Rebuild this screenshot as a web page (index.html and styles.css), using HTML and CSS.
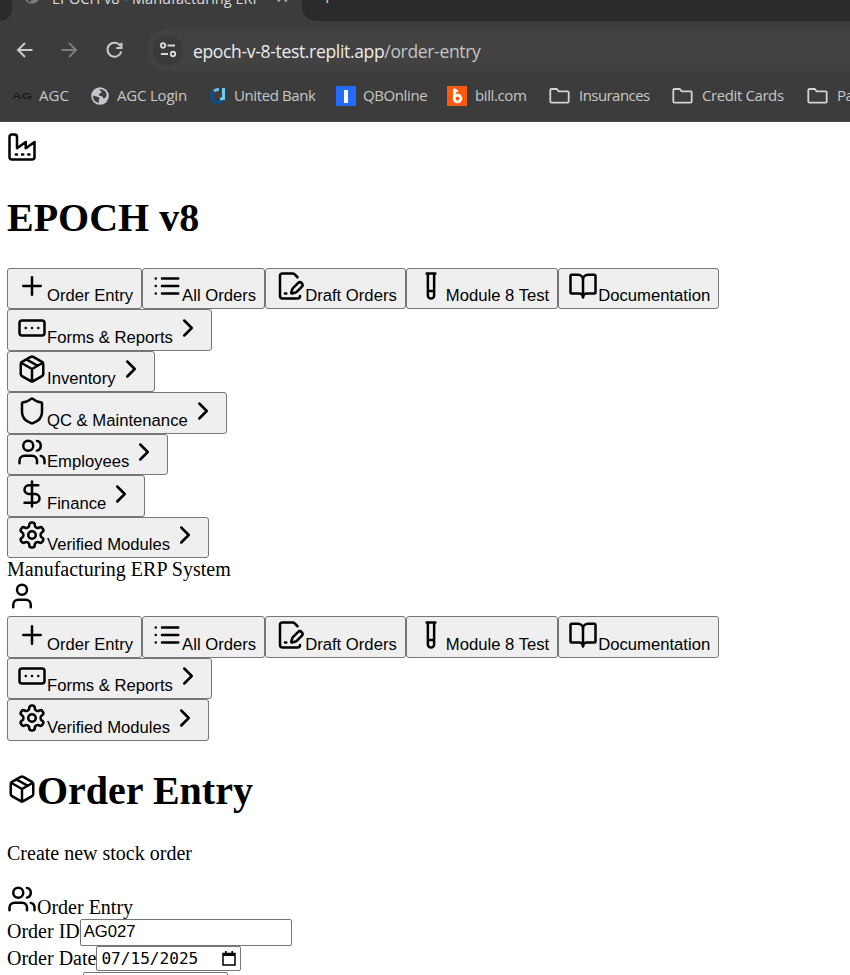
FILE: index.html
```html
<!DOCTYPE html>
<html lang="en">
<head>
<meta charset="utf-8">
<title>EPOCH v8 - Manufacturing ERP</title>
<link rel="stylesheet" href="styles.css">
</head>
<body>
<svg class="sprite" aria-hidden="true">
  <symbol id="factory" viewBox="0 0 24 24"><path d="M2 20a2 2 0 0 0 2 2h16a2 2 0 0 0 2-2V8l-7 5V8l-7 5V4a2 2 0 0 0-2-2H4a2 2 0 0 0-2 2ZM17 18h1M12 18h1M7 18h1"/></symbol>
  <symbol id="plus" viewBox="0 0 24 24"><path d="M5 12h14M12 5v14"/></symbol>
  <symbol id="list" viewBox="0 0 24 24"><path d="M8 6h13M8 12h13M8 18h13M3 6h.01M3 12h.01M3 18h.01"/></symbol>
  <symbol id="draft" viewBox="0 0 24 24"><path d="m18 5-2.414-2.414A2 2 0 0 0 14.172 2H6a2 2 0 0 0-2 2v16a2 2 0 0 0 2 2h12a2 2 0 0 0 2-2"/><path d="M21.378 12.626a1 1 0 0 0-3.004-3.004l-4.01 4.012a2 2 0 0 0-.506.854l-.837 2.87a.5.5 0 0 0 .62.62l2.87-.837a2 2 0 0 0 .854-.506z"/><path d="M8 18h1"/></symbol>
  <symbol id="tube" viewBox="0 0 24 24"><path d="M14.5 2v17.5c0 1.4-1.1 2.5-2.5 2.5s-2.5-1.1-2.5-2.5V2M8.5 2h7M14.5 16h-5"/></symbol>
  <symbol id="book" viewBox="0 0 24 24"><path d="M12 7v14"/><path d="M3 18a1 1 0 0 1-1-1V4a1 1 0 0 1 1-1h5a4 4 0 0 1 4 4 4 4 0 0 1 4-4h5a1 1 0 0 1 1 1v13a1 1 0 0 1-1 1h-6a3 3 0 0 0-3 3 3 3 0 0 0-3-3z"/></symbol>
  <symbol id="form" viewBox="0 0 24 24"><rect x="2" y="6" width="20" height="12" rx="2"/><path d="M12 12h.01M17 12h.01M7 12h.01"/></symbol>
  <symbol id="package" viewBox="0 0 24 24"><path d="M11 21.73a2 2 0 0 0 2 0l7-4A2 2 0 0 0 21 16V8a2 2 0 0 0-1-1.73l-7-4a2 2 0 0 0-2 0l-7 4A2 2 0 0 0 3 8v8a2 2 0 0 0 1 1.73zM12 22V12M3.29 7 12 12l8.71-5M7.5 4.27l9 5.15"/></symbol>
  <symbol id="shield" viewBox="0 0 24 24"><path d="M20 13c0 5-3.5 7.5-7.66 8.95a1 1 0 0 1-.67-.01C7.5 20.5 4 18 4 13V6a1 1 0 0 1 1-1c2 0 4.5-1.2 6.24-2.72a1.17 1.17 0 0 1 1.52 0C14.51 3.81 17 5 19 5a1 1 0 0 1 1 1z"/></symbol>
  <symbol id="users" viewBox="0 0 24 24"><path d="M16 21v-2a4 4 0 0 0-4-4H6a4 4 0 0 0-4 4v2M22 21v-2a4 4 0 0 0-3-3.87M16 3.13a4 4 0 0 1 0 7.75"/><circle cx="9" cy="7" r="4"/></symbol>
  <symbol id="dollar" viewBox="0 0 24 24"><path d="M12 2v20M17 5H9.5a3.5 3.5 0 0 0 0 7h5a3.5 3.5 0 0 1 0 7H6"/></symbol>
  <symbol id="gear" viewBox="0 0 24 24"><path d="M12.22 2h-.44a2 2 0 0 0-2 2v.18a2 2 0 0 1-1 1.73l-.43.25a2 2 0 0 1-2 0l-.15-.08a2 2 0 0 0-2.73.73l-.22.38a2 2 0 0 0 .73 2.73l.15.1a2 2 0 0 1 1 1.72v.51a2 2 0 0 1-1 1.74l-.15.09a2 2 0 0 0-.73 2.73l.22.38a2 2 0 0 0 2.73.73l.15-.08a2 2 0 0 1 2 0l.43.25a2 2 0 0 1 1 1.73V20a2 2 0 0 0 2 2h.44a2 2 0 0 0 2-2v-.18a2 2 0 0 1 1-1.73l.43-.25a2 2 0 0 1 2 0l.15.08a2 2 0 0 0 2.73-.73l.22-.39a2 2 0 0 0-.73-2.73l-.15-.08a2 2 0 0 1-1-1.74v-.5a2 2 0 0 1 1-1.74l.15-.09a2 2 0 0 0 .73-2.73l-.22-.38a2 2 0 0 0-2.73-.73l-.15.08a2 2 0 0 1-2 0l-.43-.25a2 2 0 0 1-1-1.73V4a2 2 0 0 0-2-2z"/><circle cx="12" cy="12" r="3"/></symbol>
  <symbol id="user" viewBox="0 0 24 24"><path d="M19 21v-2a4 4 0 0 0-4-4H9a4 4 0 0 0-4 4v2"/><circle cx="12" cy="7" r="4"/></symbol>
  <symbol id="chevron" viewBox="0 0 24 24"><path d="m9 18 6-6-6-6"/></symbol>
  <symbol id="folder" viewBox="0 0 22 18"><path d="M2.5 2h5.2l2 2.3h8.800a1.200 1.200 0 0 1 1.200 1.200v9a1.200 1.200 0 0 1-1.200 1.200h-16a1.200 1.200 0 0 1-1.200-1.200V3.200A1.200 1.200 0 0 1 2.500 2z"/></symbol>
  <symbol id="globe" viewBox="0 0 18 18"><circle cx="9" cy="9" r="8.8" fill="#c3c6ca"/><path fill="#3c3c3c" d="M2 8.5l5 1.4c2 .5 2 2 .7 2.5l.3 3.3C4.500 15.500 1.800 12.500 2 8.500zM8.600 2.200c3.400-.3 6.600 2 7 5.600-.5 2.700-1.600 3.700-3.300 3.600-.5-1.500-1-2.300-2.600-2.300-1.700-.2-2.400-1.500-1.200-2.500 1.300-.5 2.200-.8 1.900-2.200-.8-.5-1.700-1-1.800-2.200z"/></symbol>
</svg>

<header class="browser">
  <div class="tabs">
    <div class="tab-prev"></div>
    <div class="tab">
      <svg class="tab-globe"><use href="#globe"/></svg>
      <span class="tab-title">EPOCH v8 - Manufacturing ERP</span>
      <span class="tab-close">×</span>
    </div>
    <div class="tab-rest"><span class="tab-new">+</span></div>
  </div>
  <div class="toolbar">
    <svg class="tool" viewBox="0 0 20 20"><path d="M17.500 10H3.500M10 3 3 10l7 7"/></svg>
    <svg class="tool dim" viewBox="0 0 20 20"><path d="M1.500 10h14M9 3l7 7-7 7"/></svg>
    <svg class="tool" viewBox="0 0 20 20"><path d="M15.500 6A7 7 0 1 0 16.300 11.500M16.500 2.800v5.200h-5.200"/></svg>
    <div class="omnibox">
      <span class="site"><svg viewBox="0 0 18 18"><circle cx="4" cy="4.500" r="2.200"/><path d="M8.500 4.500H16M2 13h7"/><circle cx="14" cy="13" r="2.200"/></svg></span>
      <span class="url"><b>epoch-v-8-test.replit.app</b>/order-entry</span>
    </div>
  </div>
  <div class="bookmarks">
    <span class="mark mark-agc"><span class="agc-logo">AG</span><span class="label">AGC</span></span>
    <span class="mark mark-login"><svg class="fav"><use href="#globe"/></svg><span class="label">AGC Login</span></span>
    <span class="mark mark-bank"><svg class="fav" viewBox="0 0 18 18"><path d="M10 2.500A7 7 0 0 0 5 4.200" fill="none" stroke="#62c3ee" stroke-width="3"/><path d="M4.500 4.500C1 8 2 13.500 6.500 15.200c3.500 1 6.500-.7 7.800-3.700" fill="none" stroke="#0e4f86" stroke-width="3.300"/><path d="M14.500 1v10.500L11 12" fill="none" stroke="#6fcdf2" stroke-width="3"/></svg><span class="label">United Bank</span></span>
    <span class="mark mark-qb"><span class="qb-logo"></span><span class="label">QBOnline</span></span>
    <span class="mark mark-bill"><svg class="bill-logo" viewBox="0 0 20 20"><path fill="#ff5a0c" d="M0 0h20v20H0z"/><path d="M7.500 3v11.500" stroke="#fff" stroke-width="3"/><circle cx="10.500" cy="12.500" r="3.400" fill="none" stroke="#fff" stroke-width="2.800"/><path d="M7 2l4 2.500v2L7 5z" fill="#fff"/></svg><span class="label">bill.com</span></span>
    <span class="mark mark-ins"><svg class="folder"><use href="#folder"/></svg><span class="label">Insurances</span></span>
    <span class="mark mark-cards"><svg class="folder"><use href="#folder"/></svg><span class="label">Credit Cards</span></span>
    <span class="mark"><svg class="folder"><use href="#folder"/></svg><span class="label">Payroll</span></span>
  </div>
</header>

<main class="page">
  <div><svg class="icon"><use href="#factory"/></svg></div>
  <h1>EPOCH v8</h1>
  <nav class="menu">
    <div class="row">
      <button><svg class="icon"><use href="#plus"/></svg>Order Entry</button><button><svg class="icon"><use href="#list"/></svg>All Orders</button><button><svg class="icon"><use href="#draft"/></svg>Draft Orders</button><button><svg class="icon"><use href="#tube"/></svg>Module 8 Test</button><button><svg class="icon"><use href="#book"/></svg>Documentation</button>
    </div>
    <div class="row"><button><svg class="icon"><use href="#form"/></svg>Forms &amp; Reports<svg class="icon"><use href="#chevron"/></svg></button></div>
    <div class="row"><button><svg class="icon"><use href="#package"/></svg>Inventory<svg class="icon"><use href="#chevron"/></svg></button></div>
    <div class="row"><button><svg class="icon"><use href="#shield"/></svg>QC &amp; Maintenance<svg class="icon"><use href="#chevron"/></svg></button></div>
    <div class="row"><button><svg class="icon"><use href="#users"/></svg>Employees<svg class="icon"><use href="#chevron"/></svg></button></div>
    <div class="row"><button><svg class="icon"><use href="#dollar"/></svg>Finance<svg class="icon"><use href="#chevron"/></svg></button></div>
    <div class="row"><button><svg class="icon"><use href="#gear"/></svg>Verified Modules<svg class="icon"><use href="#chevron"/></svg></button></div>
  </nav>
  <div>Manufacturing ERP System</div>
  <div><svg class="icon"><use href="#user"/></svg></div>
  <nav class="menu">
    <div class="row">
      <button><svg class="icon"><use href="#plus"/></svg>Order Entry</button><button><svg class="icon"><use href="#list"/></svg>All Orders</button><button><svg class="icon"><use href="#draft"/></svg>Draft Orders</button><button><svg class="icon"><use href="#tube"/></svg>Module 8 Test</button><button><svg class="icon"><use href="#book"/></svg>Documentation</button>
    </div>
    <div class="row"><button><svg class="icon"><use href="#form"/></svg>Forms &amp; Reports<svg class="icon"><use href="#chevron"/></svg></button></div>
    <div class="row"><button><svg class="icon"><use href="#gear"/></svg>Verified Modules<svg class="icon"><use href="#chevron"/></svg></button></div>
  </nav>
  <h1><svg class="icon"><use href="#package"/></svg>Order Entry</h1>
  <p>Create new stock order</p>
  <div><svg class="icon"><use href="#users"/></svg>Order Entry</div>
  <div class="field"><span>Order ID</span><span class="box box-id">AG027</span></div>
  <div class="field"><span>Order Date</span><span class="box box-date">07/15/2025<svg class="cal" viewBox="0 0 14 15"><path d="M1 2.500h12V14H1z" fill="none" stroke="#000" stroke-width="1.500"/><path d="M1 2h12v3H1zM3 0h1.600v3H3zM9.400 0H11v3H9.400z"/></svg></span></div>
  <div class="field due"><span></span><span class="box box-due"></span></div>
</main>
</body>
</html>
```
FILE: styles.css
```css
* { box-sizing: border-box; }
html, body { height: 975px; overflow: hidden; }
body {
  margin: 0;
  background: #fff;
  color: #000;
  font: 20px/23px "Liberation Serif", serif;
}
.sprite { display: none; }

/* Browser chrome */
.browser {
  height: 122px;
  background: #3c3c3c;
  border-bottom: 1px solid #4b4b4b;
  color: #c7c7c7;
  font: 15px/20px "Open Sans", sans-serif;
  overflow: hidden;
}
.tabs { display: flex; height: 21px; }
.tab-prev { width: 12px; background: #2b2b2b; border-bottom-right-radius: 12px; }
.tab { display: flex; width: 290px; padding-left: 12px; }
.tab-globe { width: 16px; height: 16px; margin: -12px 12px 0 0; opacity: .45; flex: none; }
.tab-title { width: 210px; margin-top: -12px; font-size: 14.6px; white-space: nowrap; color: #ddd; overflow: hidden; height: 20px; flex: none; }
.tab-close { margin: -14px 0 0 14px; font-size: 22px; }
.tab-rest { flex: 1; background: #2b2b2b; border-bottom-left-radius: 14px; padding-left: 19px; }
.tab-new { display: block; margin-top: -14px; font-size: 22px; line-height: 20px; }
.toolbar { display: flex; align-items: center; height: 58px; padding-left: 15px; }
.tool { width: 20px; height: 20px; margin-right: 25px; fill: none; stroke: #cacaca; stroke-width: 2; flex: none; }
.tool.dim { stroke: #7c7c7c; }
.omnibox { display: flex; align-items: center; flex: 1; height: 42px; margin-left: -3px; padding-left: 6px; background: #424242; border-radius: 21px 0 0 21px; }
.site { display: flex; align-items: center; justify-content: center; width: 30px; height: 30px; border-radius: 50%; background: #3a3a3a; }
.site svg { width: 18px; height: 18px; fill: none; stroke: #d8d8d8; stroke-width: 1.9; }
.url { margin: 2px 0 0 10px; font-size: 17.5px; letter-spacing: -.33px; white-space: nowrap; color: #c4c4c4; }
.url b { font-weight: 400; color: #ededed; }
.bookmarks { display: flex; align-items: center; height: 34px; padding-left: 12px; overflow: hidden; }
.mark { display: flex; align-items: center; flex: none; letter-spacing: -.4px; }
.mark-agc { width: 79px; letter-spacing: 0; }
.mark-login { width: 118px; letter-spacing: -.2px; }
.mark-bank { width: 127px; }
.mark-qb { width: 111px; }
.mark-bill { width: 102px; }
.mark-ins { width: 123px; letter-spacing: -.55px; }
.mark-cards { width: 135px; }
.label { white-space: nowrap; margin-top: -2px; }
.agc-logo { width: 20px; margin-right: 7px; color: #1c1c1c; font: bold 9px/10px "Liberation Sans", sans-serif; letter-spacing: 0; transform: scaleX(1.5); transform-origin: left; }
.fav { width: 18px; height: 18px; margin-right: 8px; }
.mark-bank .fav { margin-right: 7px; }
.qb-logo { width: 20px; height: 20px; margin-right: 7px; background: linear-gradient(#fff, #fff) center / 4px 13px no-repeat #236cff; }
.bill-logo { width: 20px; height: 20px; margin-right: 8px; }
.folder { width: 22px; height: 18px; margin-right: 8px; fill: none; stroke: #d4d4d4; stroke-width: 1.8; }

/* Page content */
.page { padding: 10px 7px 0; }
.icon { width: 30px; height: 30px; fill: none; stroke: currentColor; stroke-width: 2; stroke-linecap: round; stroke-linejoin: round; vertical-align: baseline; }
h1 { margin: 27.8px 0 26.8px; font-size: 40px; line-height: 46px; }
p { margin: 1px 0 19px; }
h1 + p { margin-top: 27.8px; }
.row { display: flex; height: 41.5px; }
button {
  height: 41.5px;
  margin: 0;
  padding: 1px 8px 1px 9px;
  border: 1px solid #767676;
  border-radius: 3px;
  background: #efefef;
  color: #000;
  font: 16.667px/19px "Liberation Sans", sans-serif;
  white-space: nowrap;
}
.field { display: flex; height: 27px; line-height: 25px; }
.box { height: 27px; border: 1px solid #767676; border-radius: 2px; background: #fff; white-space: nowrap; }
.box-id { width: 212px; padding-left: 3px; font: 16.667px/24px "Liberation Sans", sans-serif; }
.box-date { display: flex; align-items: center; justify-content: space-between; width: 145px; height: 25px; padding: 0 4px; font: 16.1px/24px "DejaVu Sans Mono", monospace; }
.cal { width: 14px; height: 15px; }
.due { height: 25px; margin-top: -1px; }
.due > span:first-child { width: 76px; }
.box-due { width: 145px; height: 25px; }
```
